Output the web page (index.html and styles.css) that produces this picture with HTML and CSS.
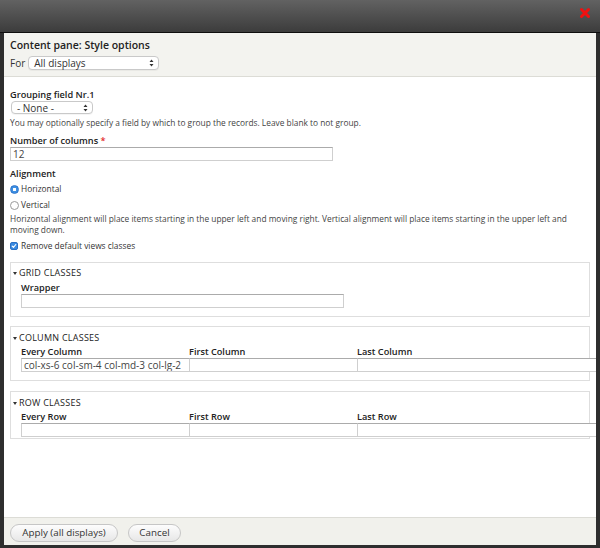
FILE: index.html
```html
<!DOCTYPE html>
<html>
<head>
<meta charset="utf-8">
<link rel="stylesheet" href="styles.css">
</head>
<body>
<div class="dialog">
  <div class="titlebar">
    <svg class="close" width="12" height="12" viewBox="0 0 12 12"><path d="M2.5 2.5 L9.5 9.5 M9.5 2.5 L2.5 9.5" stroke="#f01010" stroke-width="3" stroke-linecap="round"/></svg>
  </div>
  <div class="frame">
    <div class="header">
      <div class="title">Content pane: Style options</div>
      <div class="for-row">
        <span class="for-label">For</span>
        <div class="select select-wide"><span>All displays</span><svg class="arrows" width="5" height="8" viewBox="0 0 5 8"><path d="M2.5 0.5 L4.5 3 L0.5 3 Z M0.5 5 L4.5 5 L2.5 7.5 Z" fill="#333"/></svg></div>
      </div>
    </div>
    <div class="content">
      <div class="label">Grouping field Nr.1</div>
      <div class="select select-none"><span>- None -</span><svg class="arrows" width="5" height="8" viewBox="0 0 5 8"><path d="M2.5 0.5 L4.5 3 L0.5 3 Z M0.5 5 L4.5 5 L2.5 7.5 Z" fill="#333"/></svg></div>
      <div class="desc d1">You may optionally specify a field by which to group the records. Leave blank to not group.</div>
      <div class="label l2">Number of columns <span class="req">*</span></div>
      <div class="input input-num">12</div>
      <div class="label l3">Alignment</div>
      <div class="option opt1"><span class="radio checked"></span><span>Horizontal</span></div>
      <div class="option opt2"><span class="radio"></span><span>Vertical</span></div>
      <div class="desc d2">Horizontal alignment will place items starting in the upper left and moving right. Vertical alignment will place items starting in the upper left and<br>moving down.</div>
      <div class="option opt3"><span class="checkbox"><svg width="8" height="8" viewBox="0 0 8 8"><path d="M1.6 4.2 L3.3 5.9 L6.4 2" stroke="#fff" stroke-width="1.5" fill="none" stroke-linecap="round" stroke-linejoin="round"/></svg></span><span>Remove default views classes</span></div>

      <div class="fieldset fs1">
        <div class="legend"><span class="tri"></span>GRID CLASSES</div>
        <div class="label">Wrapper</div>
        <div class="input input-wrap"></div>
      </div>

      <div class="fieldset fs2">
        <div class="legend"><span class="tri"></span>COLUMN CLASSES</div>
        <div class="cols">
          <div class="col"><div class="label">Every Column</div><div class="input">col-xs-6 col-sm-4 col-md-3 col-lg-2</div></div>
          <div class="col"><div class="label">First Column</div><div class="input"></div></div>
          <div class="col col-last"><div class="label">Last Column</div><div class="input"></div></div>
        </div>
      </div>

      <div class="fieldset fs3">
        <div class="legend"><span class="tri"></span>ROW CLASSES</div>
        <div class="cols">
          <div class="col"><div class="label">Every Row</div><div class="input"></div></div>
          <div class="col"><div class="label">First Row</div><div class="input"></div></div>
          <div class="col col-last"><div class="label">Last Row</div><div class="input"></div></div>
        </div>
      </div>
    </div>
    <div class="footer">
      <button class="btn btn-apply">Apply (all displays)</button>
      <button class="btn btn-cancel">Cancel</button>
    </div>
  </div>
</div>
</body>
</html>
```

FILE: styles.css
```css
* { box-sizing: border-box; }
html, body { margin: 0; padding: 0; }
body {
  width: 600px;
  height: 548px;
  background: #2e2e2e;
  font-family: "Open Sans", "DejaVu Sans", sans-serif;
  font-size: 8.35px;
  color: #333;
  overflow: hidden;
}
.dialog {
  display: flex;
  flex-direction: column;
  height: 548px;
}
.titlebar {
  height: 33px;
  flex: none;
  background: linear-gradient(#626262, #3c3c3c);
  border-bottom: 1px solid #0e0e0e;
  display: flex;
  justify-content: flex-end;
  align-items: flex-start;
  padding: 7px 9px 0 0;
}
.frame {
  flex: 1;
  display: flex;
  flex-direction: column;
  margin: 0 4px 3px 4px;
  background: #fff;
  overflow: hidden;
  min-height: 0;
}
.header {
  flex: none;
  height: 44px;
  background: #f3f3ef;
  border-bottom: 1px solid #dcdcd6;
  padding: 5px 6px 0 6px;
}
.title {
  font-size: 10.5px;
  font-weight: 600;
  line-height: 14px;
  color: #222;
}
.for-row {
  display: flex;
  align-items: center;
  gap: 3px;
  margin-top: 4px;
  height: 14px;
}
.for-label { font-size: 10px; color: #333; }
.select {
  display: flex;
  align-items: center;
  justify-content: space-between;
  height: 14px;
  border: 1px solid #c9c9c9;
  border-radius: 4px;
  background: #fff;
  padding: 0 4px 0 5px;
  box-shadow: 0 1px 0 rgba(0,0,0,0.04);
  line-height: 12px;
  font-size: 10px;
  color: #333;
}
.select-wide { width: 131px; }
.select-none { width: 82px; margin-left: 1px; height: 13px; }
.content {
  flex: 1;
  padding: 12px 6px 0 6px;
  overflow: hidden;
  min-height: 0;
}
.label {
  font-weight: 600;
  font-size: 9.2px;
  color: #222;
  line-height: 12px;
  height: 12px;
  white-space: nowrap;
}
.req { color: #e32a2a; }
.desc {
  color: #444;
  line-height: 11px;
}
.d1 { margin-top: 3px; }
.l2 { margin-top: 7px; }
.l3 { margin-top: 7px; }
.input {
  height: 14px;
  border: 1px solid #cfcfcf;
  border-top-color: #ababab;
  background: #fff;
  padding: 0 2px;
  line-height: 12px;
  font-size: 10px;
  color: #444;
  white-space: nowrap;
  overflow: hidden;
}
.input-num { width: 323px; }
.input-wrap { width: 323px; }
.option {
  display: flex;
  align-items: center;
  gap: 2px;
  height: 12px;
  line-height: 12px;
}
.opt1 { margin-top: 3px; }
.opt2 { margin-top: 4px; }
.d2 { margin-top: 2px; }
.opt3 { margin-top: 5px; gap: 3px; }
.radio {
  width: 9px;
  height: 9px;
  border-radius: 50%;
  border: 1px solid #9a9a9a;
  background: #fff;
  display: inline-block;
}
.radio.checked {
  border-color: #2c74cc;
  background: radial-gradient(circle, #fff 0 1.4px, #3d8fe2 1.8px);
}
.checkbox {
  width: 8px;
  height: 8px;
  border-radius: 2px;
  background: #3a8ae0;
  border: 0.5px solid #2a6fc4;
  display: flex;
  align-items: center;
  justify-content: center;
}
.checkbox svg { display: block; }
.fieldset {
  border: 1px solid #dedede;
  padding: 4px 10px 8px 10px;
}
.fs1 { margin-top: 10px; }
.fs2 { margin-top: 9px; padding-top: 5px; }
.fs3 { margin-top: 10px; padding-top: 5px; padding-bottom: 1px; }
.legend {
  display: flex;
  align-items: center;
  gap: 2px;
  margin-left: -8px;
  line-height: 12px;
  height: 12px;
  color: #222;
  font-size: 9px;
  letter-spacing: 0.25px;
  white-space: nowrap;
}
.fieldset .legend + .label { margin-top: 3px; }
.fieldset .legend + .cols { margin-top: 2px; }
.tri {
  width: 0;
  height: 0;
  border-left: 2.5px solid transparent;
  border-right: 2.5px solid transparent;
  border-top: 3px solid #333;
}
.cols {
  display: flex;
}
.col {
  flex: none;
  width: 168px;
}
.col .input { width: 169px; }
.col-last { width: 300px; }
.col-last .input { width: 300px; }
.footer {
  flex: none;
  height: 28px;
  background: #f1f1ec;
  border-top: 1px solid #dcdcd6;
  padding: 6px 6px 0 6px;
  display: flex;
  align-items: flex-start;
  gap: 10px;
}
.btn {
  height: 18px;
  border: 1px solid #c6c6c6;
  border-radius: 9px;
  background: linear-gradient(#fdfdfd, #e7e7e7);
  font-family: "Open Sans", "DejaVu Sans", sans-serif;
  font-size: 9.8px;
  color: #333;
  padding: 0;
  line-height: 16px;
  margin: 0;
}
.btn-apply { width: 108px; }
.btn-cancel { width: 53px; }
```
